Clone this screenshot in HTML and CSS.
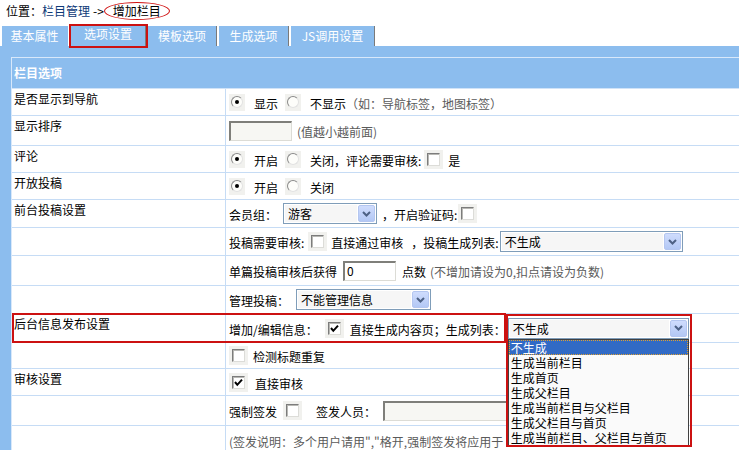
FILE: index.html
```html
<!DOCTYPE html>
<html lang="zh-CN">
<head>
<meta charset="utf-8">
<title>增加栏目</title>
<link rel="stylesheet" href="styles.css">
</head>
<body>
<div class="crumb"><span>位置：</span><span class="link">栏目管理</span><span class="arrow">-&gt;</span><span class="oval">增加栏目</span></div>
<div class="tabs">
  <span class="tab t1">基本属性</span>
  <span class="tab t2 active">选项设置</span>
  <span class="tab t3">模板选项</span>
  <span class="tab t4">生成选项</span>
  <span class="tab t5">JS调用设置</span>
</div>
<div class="panel">
  <div class="grid">
    <div class="head">栏目选项</div>

    <div class="row h27">
      <div class="lab">是否显示到导航</div>
      <div class="val">
        <span class="rb on"><i></i></span><span class="tx m9">显示</span>
        <span class="rb m7"><i></i></span><span class="tx m9">不显示<span class="hint">（如：导航标签，地图标签）</span></span>
      </div>
    </div>

    <div class="row h30">
      <div class="lab">显示排序</div>
      <div class="val">
        <span class="inp w63"></span><span class="tx hint m5">(值越小越前面)</span>
      </div>
    </div>

    <div class="row h27">
      <div class="lab">评论</div>
      <div class="val">
        <span class="rb on"><i></i></span><span class="tx m9">开启</span>
        <span class="rb m7"><i></i></span><span class="tx m9">关闭，评论需要审核:</span>
        <span class="cb m3"><i></i></span><span class="tx m5">是</span>
      </div>
    </div>

    <div class="row h27">
      <div class="lab">开放投稿</div>
      <div class="val">
        <span class="rb on"><i></i></span><span class="tx m9">开启</span>
        <span class="rb m7"><i></i></span><span class="tx m9">关闭</span>
      </div>
    </div>

    <div class="row h28">
      <div class="lab">前台投稿设置</div>
      <div class="val">
        <span class="tx">会员组：</span>
        <span class="sel w94 m6"><span class="st">游客</span><span class="arr"><svg width="9" height="6" viewBox="0 0 9 6"><polyline points="1,1 4.5,4.5 8,1" fill="none" stroke="#4d6185" stroke-width="2"/></svg></span></span>
        <span class="tx m5">，开启验证码:</span>
        <span class="cb m1"><i></i></span>
      </div>
    </div>

    <div class="row h28">
      <div class="lab"></div>
      <div class="val">
        <span class="tx">投稿需要审核:</span>
        <span class="cb m4"><i></i></span>
        <span class="tx m4">直接通过审核</span>
        <span class="tx m8">，投稿生成列表:</span>
        <span class="sel w183 m1"><span class="st">不生成</span><span class="arr"><svg width="9" height="6" viewBox="0 0 9 6"><polyline points="1,1 4.5,4.5 8,1" fill="none" stroke="#4d6185" stroke-width="2"/></svg></span></span>
      </div>
    </div>

    <div class="row h30">
      <div class="lab"></div>
      <div class="val">
        <span class="tx">单篇投稿审核后获得</span>
        <span class="inp w53 white m6">0</span>
        <span class="tx m6">点数</span>
        <span class="tx hint m4">(不增加请设为0,扣点请设为负数)</span>
      </div>
    </div>

    <div class="row h28">
      <div class="lab"></div>
      <div class="val">
        <span class="tx">管理投稿：</span>
        <span class="sel w135 m7"><span class="st">不能管理信息</span><span class="arr"><svg width="9" height="6" viewBox="0 0 9 6"><polyline points="1,1 4.5,4.5 8,1" fill="none" stroke="#4d6185" stroke-width="2"/></svg></span></span>
      </div>
    </div>

    <div class="row h29 mark">
      <div class="lab">后台信息发布设置</div>
      <div class="val">
        <span class="tx">增加/编辑信息：</span>
        <span class="cb on m7"><i><svg width="11" height="11" viewBox="0 0 11 11"><polyline points="2,5 4.3,7.8 9,2.6" fill="none" stroke="#000" stroke-width="2"/></svg></i></span>
        <span class="tx m6">直接生成内容页；生成列表：</span>
        <span class="selwrap m2">
          <span class="sel w181"><span class="st">不生成</span><span class="arr"><svg width="9" height="6" viewBox="0 0 9 6"><polyline points="1,1 4.5,4.5 8,1" fill="none" stroke="#4d6185" stroke-width="2"/></svg></span></span>
          <span class="list">
            <span class="opt cur">不生成</span>
            <span class="opt">生成当前栏目</span>
            <span class="opt">生成首页</span>
            <span class="opt">生成父栏目</span>
            <span class="opt">生成当前栏目与父栏目</span>
            <span class="opt">生成父栏目与首页</span>
            <span class="opt">生成当前栏目、父栏目与首页</span>
          </span>
          <span class="redbox2"></span>
        </span>
      </div>
      <span class="redbox1"></span>
    </div>

    <div class="row h26">
      <div class="lab"></div>
      <div class="val">
        <span class="cb"><i></i></span><span class="tx m5">检测标题重复</span>
      </div>
    </div>

    <div class="row h27">
      <div class="lab">审核设置</div>
      <div class="val">
        <span class="cb on"><i><svg width="11" height="11" viewBox="0 0 11 11"><polyline points="2,5 4.3,7.8 9,2.6" fill="none" stroke="#000" stroke-width="2"/></svg></i></span><span class="tx m7">直接审核</span>
      </div>
    </div>

    <div class="row h30">
      <div class="lab"></div>
      <div class="val">
        <span class="tx">强制签发</span>
        <span class="cb m6"><i></i></span>
        <span class="tx m14">签发人员：</span>
        <span class="inp w200 m7"></span>
      </div>
    </div>

    <div class="row h30">
      <div class="lab"></div>
      <div class="val">
        <span class="tx hint">(签发说明：多个用户请用","格开,强制签发将应用于</span>
      </div>
    </div>
  </div>
</div>
</body>
</html>
```

FILE: styles.css
```css
html, body {
  margin: 0;
  padding: 0;
  background: #fff;
}
body {
  width: 739px;
  height: 450px;
  overflow: hidden;
  font-family: "Noto Sans CJK SC", "Liberation Sans", sans-serif;
  font-size: 12px;
  line-height: 14px;
  color: #000;
}

/* breadcrumb */
.crumb {
  height: 26px;
  box-sizing: border-box;
  padding: 2px 0 0 6px;
  display: flex;
  align-items: flex-start;
}
.crumb > span { line-height: 18px; }
.link { color: #0e3a78; }
.arrow { margin-left: 3px; }
.oval {
  height: 18px;
  box-sizing: border-box;
  border: 1.5px solid #d01010;
  border-radius: 50%;
  padding: 0 8px 0 8px;
  line-height: 15px !important;
  margin-left: 0;
}

/* tabs */
.tabs {
  display: flex;
  height: 20px;
  padding-left: 2px;
}
.tab {
  box-sizing: border-box;
  height: 20px;
  background: #8cbdee;
  color: #fff;
  text-align: center;
  line-height: 20px;
  border-right: 1px solid #7a7a7a;
  margin-right: 2px;
}
.t1 { width: 66px; margin-right: 3px; border-right-color: #8cbdee; }
.t2 { width: 75px; }
.t3 { width: 69px; }
.t4 { width: 70px; }
.t5 { width: 84px; }
.active {
  line-height: 16px;
  outline: 2px solid #cc1111;
  outline-offset: 0;
}

/* panel */
.panel {
  background: #8cbdee;
  padding: 11px 0 0 11px;
}
.grid {
  background: #fff;
  border-left: 1px solid #d8e8fa;
  border-top: 1px solid #d8e8fa;
}
.head {
  height: 31px;
  box-sizing: border-box;
  background: #8cbdee;
  color: #fff;
  font-weight: bold;
  padding-left: 2px;
  line-height: 29px;
  border-bottom: 1px solid #d0e3f8;
}
.row {
  display: grid;
  grid-template-columns: 214px 1fr;
  box-sizing: border-box;
  border-bottom: 1px solid #c6dcf5;
  position: relative;
}
.h26 { height: 26px; }
.h27 { height: 27px; }
.h28 { height: 28px; }
.h29 { height: 29px; }
.h30 { height: 30px; }
.lab {
  box-sizing: border-box;
  border-right: 1px solid #c6dcf5;
  padding: 3px 0 0 2px;
  line-height: 14px;
}
.val {
  display: flex;
  align-items: center;
  padding-left: 3px;
  white-space: nowrap;
}
.tx { padding-top: 3px; line-height: 14px; }
.hint { color: #5a5a5a; }

.m1 { margin-left: 1px; }
.m2 { margin-left: 2px; }
.m3 { margin-left: 3px; }
.m4 { margin-left: 4px; }
.m5 { margin-left: 5px; }
.m6 { margin-left: 6px; }
.m7 { margin-left: 7px; }
.m8 { margin-left: 8px; }
.m9 { margin-left: 9px; }
.m14 { margin-left: 14px; }

/* radio */
.rb {
  width: 16px;
  height: 17px;
  background: #f1f1ee;
  display: inline-flex;
  align-items: center;
  justify-content: center;
  flex: none;
}
.rb i {
  width: 12px;
  height: 12px;
  box-sizing: border-box;
  border-radius: 50%;
  border: 1px solid;
  border-color: #8a8a8a #e2e2e2 #e2e2e2 #8a8a8a;
  background: #fdfdfa;
  display: flex;
  align-items: center;
  justify-content: center;
}
.rb.on i::after {
  content: "";
  width: 4px;
  height: 4px;
  border-radius: 50%;
  background: #000;
}

/* checkbox */
.cb {
  width: 19px;
  height: 19px;
  background: #f1f1ee;
  display: inline-flex;
  align-items: center;
  justify-content: center;
  flex: none;
}
.cb i {
  width: 13px;
  height: 13px;
  box-sizing: border-box;
  border: 1px solid;
  border-color: #7c7c7c #dcdcd8 #dcdcd8 #7c7c7c;
  box-shadow: inset 1px 1px 0 #b8b8b4;
  background: #fff;
  display: flex;
  align-items: center;
  justify-content: center;
}
.cb i svg { display: block; }

/* text input */
.inp {
  display: inline-block;
  height: 20px;
  box-sizing: border-box;
  border-style: solid;
  border-width: 2px 1px 1px 2px;
  border-color: #7f7f7a #dcdcd6 #dcdcd6 #7f7f7a;
  background: #f7f7f3;
  line-height: 16px;
  padding-left: 2px;
  flex: none;
}
.inp.white { background: #fff; }
.w53 { width: 53px; }
.w63 { width: 63px; }
.w200 { width: 200px; }

/* select */
.sel {
  display: inline-flex;
  height: 21px;
  box-sizing: border-box;
  border: 1px solid #7f9db9;
  background: #fff;
  padding: 1px;
  align-items: stretch;
  flex: none;
}
.w94 { width: 94px; }
.w135 { width: 135px; }
.w181 { width: 181px; }
.w183 { width: 183px; }
.st {
  flex: 1;
  background: #f6f6f6;
  padding-left: 3px;
  line-height: 17px;
  margin-right: 1px;
}
.arr {
  width: 17px;
  box-sizing: border-box;
  background: linear-gradient(#cfdcfd, #b3c8f5);
  border: 1px solid #b4c6f0;
  border-radius: 2px;
  display: flex;
  align-items: center;
  justify-content: center;
}
.arr svg { display: block; }

/* opened dropdown */
.selwrap {
  position: relative;
  display: inline-flex;
  flex: none;
}
.list {
  position: absolute;
  left: 0;
  top: 21px;
  width: 181px;
  box-sizing: border-box;
  border: 1px solid #404040;
  background: #fafafa;
  z-index: 5;
  display: flex;
  flex-direction: column;
}
.opt {
  height: 15px;
  line-height: 15px;
  padding-left: 2px;
}
.opt.cur {
  background: #316ac5;
  color: #fff;
  outline: 1px dotted #e0a030;
  outline-offset: -1px;
}
.redbox1 {
  position: absolute;
  left: 0;
  top: -1px;
  width: 494px;
  height: 30px;
  box-sizing: border-box;
  border: 2px solid #cc1111;
  z-index: 6;
  pointer-events: none;
}
.redbox2 {
  position: absolute;
  left: -2px;
  top: -4px;
  width: 186px;
  height: 133px;
  box-sizing: border-box;
  border: 2px solid #cc1111;
  z-index: 6;
  pointer-events: none;
}
```
